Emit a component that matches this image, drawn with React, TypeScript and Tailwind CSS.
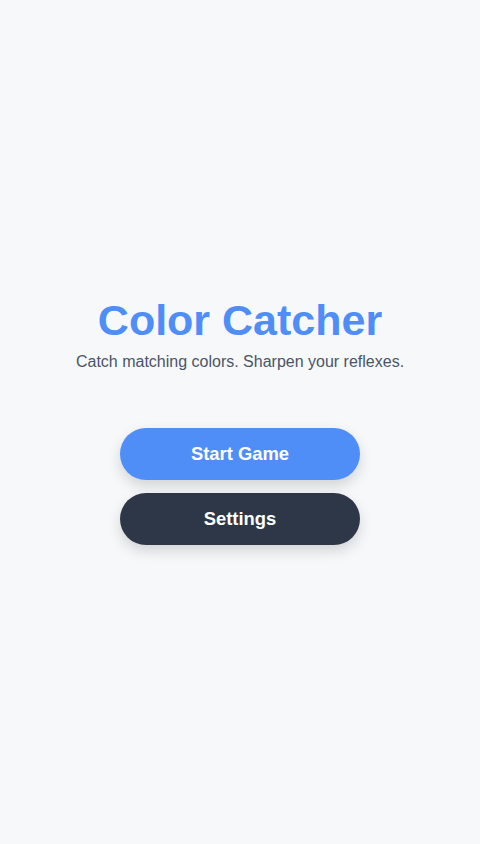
export default function App() {
  return (
    <div
      className="min-h-screen w-full bg-[#f7f8fa] flex flex-col items-center justify-center px-6"
      style={{ fontFamily: '"Liberation Sans", Arial, sans-serif' }}
    >
      <h1 className="text-[43px] leading-[1.2] font-bold text-[#4f8ef7]">Color Catcher</h1>
      <p className="mt-[3px] text-base leading-6 text-[#4a5568]">
        Catch matching colors. Sharpen your reflexes.
      </p>
      <div className="mt-[54px] mb-[4px] flex flex-col gap-[13px]">
        <button className="w-[240px] h-[52px] rounded-full bg-[#4f8ef7] text-white text-[18.4px] font-bold shadow-[0_6px_14px_rgba(0,0,0,0.15)]">
          Start Game
        </button>
        <button className="w-[240px] h-[52px] rounded-full bg-[#2d3748] text-white text-[18.4px] font-bold shadow-[0_6px_14px_rgba(0,0,0,0.15)]">
          Settings
        </button>
      </div>
    </div>
  );
}
